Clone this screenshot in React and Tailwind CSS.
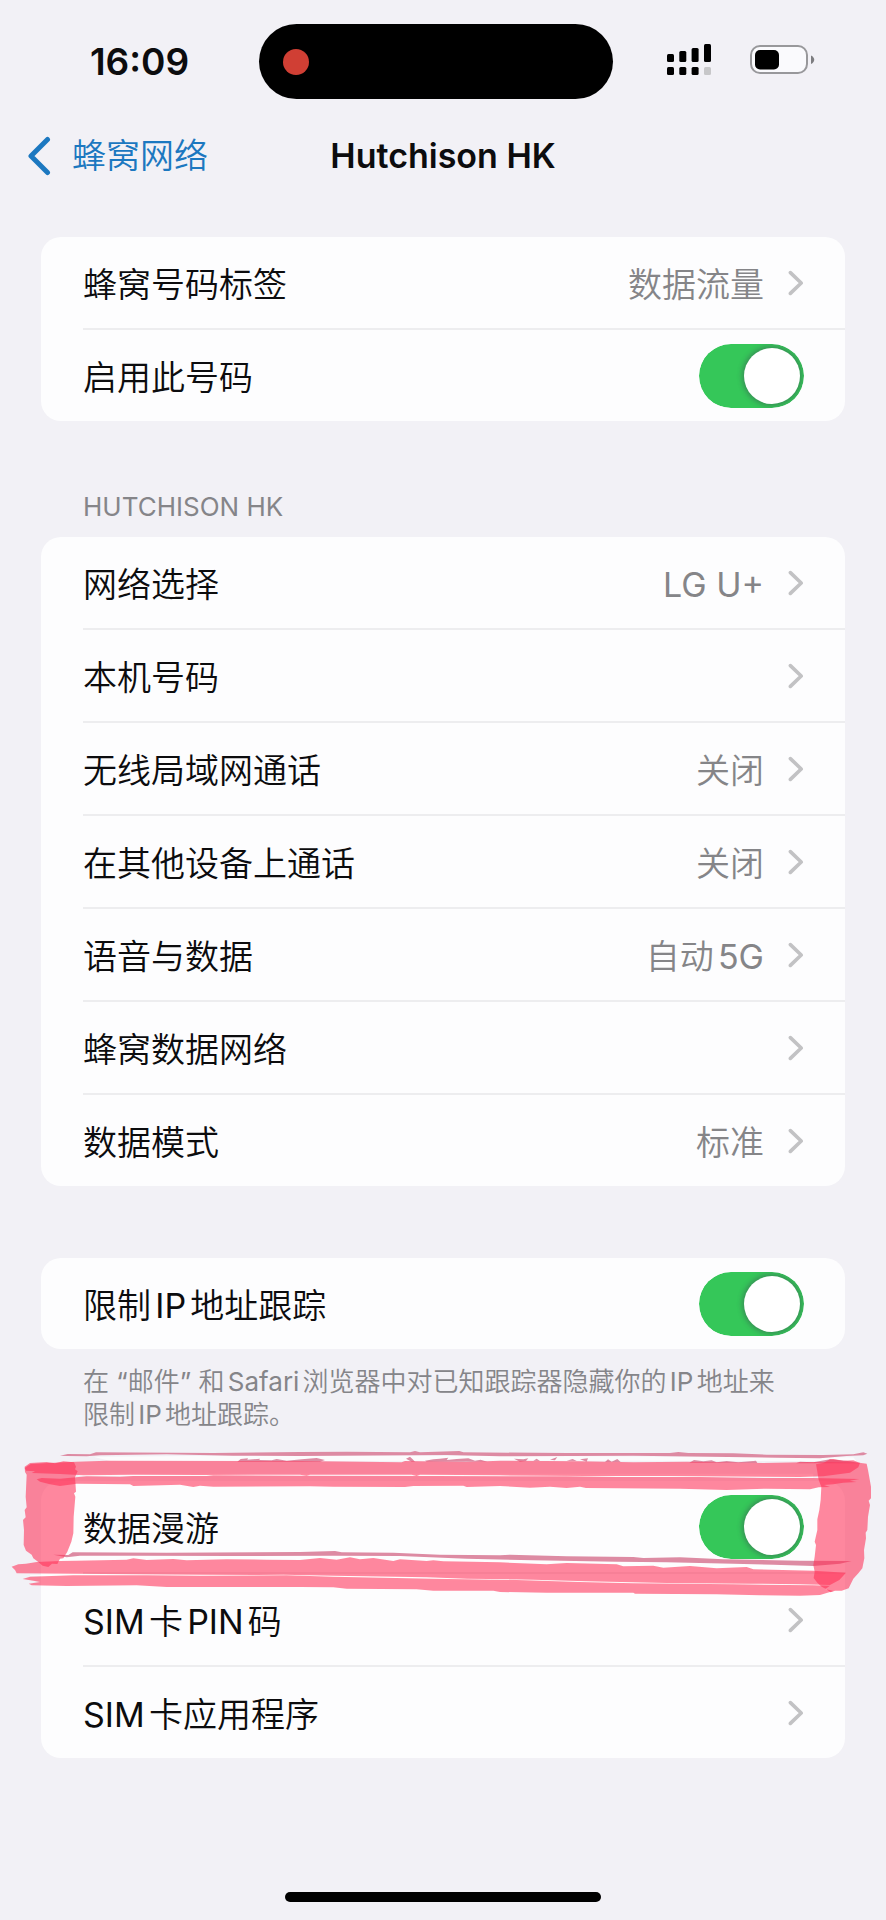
import React, { useId, useState } from 'react';

const Chevron = () => (
  <svg className="h-[26px] w-4 shrink-0" viewBox="0 0 16 26" fill="none" stroke="#c2c2c4" strokeWidth="3.6" strokeLinecap="round" strokeLinejoin="round">
    <path d="M2.4 2.6L13.2 13L2.4 23.4" />
  </svg>
);

const Row = ({ children }) => (
  <li className="ml-[42px] flex h-[91px] items-center pr-[41px]">{children}</li>
);

const LinkRow = ({ label, value }) => (
  <Row>
    <a href="#" className="flex w-full items-center justify-between">
      <span className="pt-1">{label}</span>
      <span className="flex items-center gap-6">
        {value && <span className="pt-1 text-[#858588]">{value}</span>}
        <Chevron />
      </span>
    </a>
  </Row>
);

const ToggleRow = ({ label }) => {
  const [on, setOn] = useState(true);
  const id = useId();

  return (
    <Row>
      <label htmlFor={id} className="flex-1 pt-1">{label}</label>
      <span className="relative h-16 w-[105px] shrink-0">
        <input
          id={id}
          type="checkbox"
          role="switch"
          checked={on}
          onChange={(e) => setOn(e.target.checked)}
          className="peer block h-full w-full cursor-pointer appearance-none rounded-full bg-[#e4e4e8] checked:bg-[#35c759]"
        />
        <span className="pointer-events-none absolute top-1 left-1 h-14 w-14 rounded-full bg-white shadow-[0_0_5px_2px_rgba(60,60,80,0.4)] peer-checked:left-[45px]" />
        <span className="pointer-events-none absolute inset-0 rounded-full shadow-[0_0_0_8px_#fdfdfe]" />
      </span>
    </Row>
  );
};

const Divider = () => <li aria-hidden="true" className="ml-[42px] h-[2px] bg-[#ededef]" />;

const Card = ({ children }) => {
  const rows = React.Children.toArray(children);
  return (
    <ul className="overflow-hidden rounded-[20px] bg-[#fdfdfe]">
      {rows.map((row, i) => (
        <React.Fragment key={i}>
          {i > 0 && <Divider />}
          {row}
        </React.Fragment>
      ))}
    </ul>
  );
};

const Signal = () => (
  <svg className="h-8 w-[45px]" viewBox="0 0 45 32">
    <rect x="0" y="10" width="7" height="8" rx="1.5" />
    <rect x="12.3" y="7" width="7" height="11" rx="1.5" />
    <rect x="24.6" y="4" width="7" height="14" rx="1.5" />
    <rect x="37" y="0" width="7" height="18" rx="1.5" />
    <rect x="0" y="23" width="7" height="8" rx="1.5" />
    <rect x="12.3" y="23" width="7" height="8" rx="1.5" />
    <rect x="24.6" y="23" width="7" height="8" rx="1.5" />
    <rect x="37" y="23" width="7" height="8" rx="1.5" fill="#c7c7c9" />
  </svg>
);

const Battery = () => (
  <svg className="h-[30px] w-[65px]" viewBox="0 0 65 30">
    <rect x="1" y="1" width="56" height="27" rx="9" fill="#fafafd" stroke="#98989b" strokeWidth="2" />
    <rect x="5" y="5" width="24" height="19.5" rx="5" />
    <path d="M61 10.5C65.3 12.5 65.3 17 61 19Z" fill="#7d7d80" />
  </svg>
);

// hand-drawn highlighter frame around the roaming row
const Marker = () => (
  <svg className="pointer-events-none absolute inset-x-0 -top-[51px] h-[180px] w-full" viewBox="0 0 2658 540" preserveAspectRatio="none">
    <g fill="#ffffff" fillOpacity="0.75">
      <path d="M280 80L900 76L1600 78L2560 82L2570 94L1900 92L900 93L330 93Z" />
      <path d="M235 131H2440L2440 143L900 138L235 138Z" />
      <path d="M90 434L900 434L1758 452L2430 460L1758 462L900 440L90 438Z" />
    </g>
    <g fill="#dd8ba3">
      <path d="M180 77L203 72L270 73L288 67L640 69L900 66L1040 65L1230 67L1245 63L1260 67L1378 63L1390 67L1700 69L2010 69L2035 66L2065 69L2200 70L2300 74L2470 75L2560 73L2590 67L2602 71L2590 76L2540 78L2460 85L2330 83L2130 80L1900 77L1500 79L1340 75L900 78L700 77L500 73L300 76L260 79L200 78Z" />
      <path d="M160 374L205 375L218 367L500 368L900 366L1005 363L1025 367L1180 368L1320 374L1500 376L1530 374L1700 379L1900 381L1930 384L2040 382L2170 388L2400 392L2555 393L2520 401L2440 408L2320 404L2200 401L2000 397L1850 395L1600 391L1400 386L1200 378L1000 377L700 378L400 377L240 377L200 382Z" />
      <path d="M712 95L722 87L744 85L742 89L780 86L778 90L815 91L830 87L860 92L905 88L950 84L975 90L960 95Z" />
      <path d="M1218 86L1230 80L1238 88L1245 95H1235ZM1275 92L1300 88L1320 86L1345 83L1340 90L1370 87L1405 85L1425 92L1442 89L1462 95H1280ZM1542 86L1570 88L1585 85L1578 93L1560 95ZM1600 92L1610 86L1620 93ZM1650 89L1672 81L1665 91ZM1700 92L1718 87L1730 93ZM1740 88L1764 85L1760 95Z" />
      <path d="M1815 96L1824 88L1835 95L1852 87L1862 96ZM2068 98L2082 90L2110 94L2135 91L2150 97L2180 93L2215 97L2268 92L2272 99ZM2388 100L2400 95L2440 97L2490 88L2550 94L2580 100Z" />
    </g>
    <g fill="#ff2d55" fillOpacity="0.57">
      {/* top strokes */}
      <path d="M78 122L74 114L92 102L130 100L228 95L320 92L900 93L1205 97L1215 93L1400 96L1500 92L1740 94L1900 97L2060 95L2290 99L2440 96L2580 98L2575 112L2550 128L2470 139L2400 141L2000 138L1758 138L1500 136L1260 134L1250 138L1235 134L930 134L920 137L900 134L600 135L400 134L250 136L180 132L95 129L105 124Z" />
      <path d="M110 148L125 144L180 146L260 139L360 140L400 138L620 138L640 136L900 137L1300 138L1700 139L1850 141L2100 141L2300 144L2440 144L2578 147L2550 152L2570 156L2530 158L2500 163L2472 165L2490 171L2456 172L2430 178L2300 176L2180 180L2040 176L1758 174L1740 170L1700 174L1650 170L1590 173L1500 168L1400 171L1390 167L1240 168L1215 171L1000 170L930 169L640 170L600 167L580 171L540 164L400 168L390 163L230 161L180 168L150 163L120 155Z" />
      {/* left stroke */}
      <path d="M80 134L75 126L74 110L90 99L140 96L165 100L190 94L222 97L228 110L225 118L233 124L225 142L228 185L222 190L226 200L221 260L220 310L214 335L202 365L190 385L180 386L172 402L156 401L145 411L128 407L112 394L100 385L95 374L78 362L71 345L72 300L69 270L77 262L74 240L80 232L77 200Z" />
      {/* bottom strokes */}
      <path d="M35 410L55 403L78 401L110 396L180 393L230 392L380 389L400 385L440 390L520 387L560 391L680 388L800 389L900 390L960 384L1010 389L1050 382L1080 388L1120 384L1180 393L1200 388L1280 393L1300 391L1330 394L1500 397L1640 403L1700 399L1850 403L1870 409L1960 407L1990 413L2070 408L2150 415L2240 411L2260 418L2440 422L2538 428L2518 450L2490 465L2400 463L2250 461L2000 459L1758 454L1600 449L1400 446L1280 442L1000 437L850 434L770 435L600 434L400 433L50 430L45 420Z" />
      <path d="M68 447L90 440L220 436L440 436L600 437L860 436L1000 440L1300 446L1550 450L1740 456L1900 460L2200 463L2440 466L2490 467L2476 477L2500 483L2460 495L2400 497L2280 496L2150 493L1905 491L1900 488L1640 488L1500 486L1480 482L1300 482L1250 478L1040 476L1000 472L900 471L500 471L410 466L200 468L95 466L86 461L120 456L100 452Z" />
      {/* right stroke */}
      <path d="M2448 103L2470 99L2490 88L2500 87L2530 92L2560 91L2578 98L2600 101L2604 120L2613 170L2613 205L2606 212L2610 225L2604 260L2602 300L2597 308L2598 325L2592 360L2593 385L2587 415L2575 430L2560 446L2546 475L2525 482L2505 482L2492 487L2478 477L2465 470L2452 458L2441 444L2444 425L2440 405L2444 380L2448 345L2444 335L2452 300L2452 268L2458 240L2462 210L2464 170L2456 150L2452 125Z" />
    </g>
  </svg>
);

export default function App() {
  return (
    <div className="flex min-h-screen flex-col bg-[#f2f1f6] font-[Inter,'Noto_Sans_CJK_SC_DemiLight','Noto_Sans_CJK_SC',sans-serif] text-[34px] leading-[50px] text-[#0c0c0e] [text-autospace:normal]">
      <div className="grid grid-cols-[259fr_354fr_273fr] items-center pt-6">
        <span className="pl-5 text-center text-[37px] font-semibold">16:09</span>
        <div className="flex h-[75px] items-center rounded-full bg-black pl-6">
          <span className="h-[26px] w-[26px] rounded-full bg-[#d03f34]" />
        </div>
        <div className="flex items-center justify-center gap-[38px] pr-[18px] pb-1">
          <Signal />
          <Battery />
        </div>
      </div>

      <header className="mt-8 grid grid-cols-[1fr_auto_1fr] items-center">
        <a href="#" className="flex items-center gap-5 pl-7 text-[#1c78c0]">
          <svg className="h-10 w-6" viewBox="0 0 24 40" fill="none" stroke="currentColor" strokeWidth="5" strokeLinecap="round" strokeLinejoin="round">
            <path d="M19.5 3.5L3 20L19.5 36.5" />
          </svg>
          <span>蜂窝网络</span>
        </a>
        <h1 className="font-semibold">Hutchison HK</h1>
      </header>

      <main className="mt-14 px-[41px]">
        <Card>
          <LinkRow label="蜂窝号码标签" value="数据流量" />
          <ToggleRow label="启用此号码" />
        </Card>

        <section className="mt-[68px]">
          <h2 className="px-[42px] pb-3 text-[26px] leading-9 text-[#858589]">HUTCHISON HK</h2>
          <Card>
            <LinkRow label="网络选择" value="LG U+" />
            <LinkRow label="本机号码" />
            <LinkRow label="无线局域网通话" value="关闭" />
            <LinkRow label="在其他设备上通话" value="关闭" />
            <LinkRow label="语音与数据" value="自动5G" />
            <LinkRow label="蜂窝数据网络" />
            <LinkRow label="数据模式" value="标准" />
          </Card>
        </section>

        <section className="mt-[72px]">
          <Card>
            <ToggleRow label="限制IP地址跟踪" />
          </Card>
          <p className="mt-4 pr-14 pl-[42px] text-[26px] leading-[33px] text-[#858589]">
            在 “邮件” 和Safari浏览器中对已知跟踪器隐藏你的IP地址来限制IP地址跟踪。
          </p>
        </section>
      </main>

      <section className="relative mt-[50px] px-[41px]">
        <Card>
          <ToggleRow label="数据漫游" />
          <LinkRow label="SIM卡PIN码" />
          <LinkRow label="SIM卡应用程序" />
        </Card>
        <Marker />
      </section>

      <div className="mx-auto mt-auto mb-[18px] h-[10px] w-[316px] rounded-full bg-black" />
    </div>
  );
}
